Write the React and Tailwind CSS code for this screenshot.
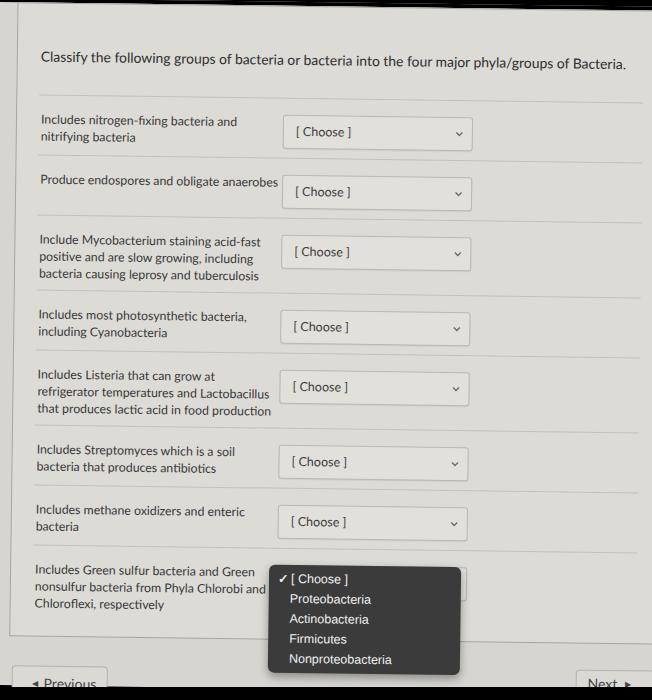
import React from 'react';

const rows = [
    ['Includes nitrogen-fixing bacteria and', 'nitrifying bacteria'],
    ['Produce endospores and obligate anaerobes'],
    ['Include Mycobacterium staining acid-fast', 'positive and are slow growing, including', 'bacteria causing leprosy and tuberculosis'],
    ['Includes most photosynthetic bacteria,', 'including Cyanobacteria'],
    ['Includes Listeria that can grow at', 'refrigerator temperatures and Lactobacillus', 'that produces lactic acid in food production'],
    ['Includes Streptomyces which is a soil', 'bacteria that produces antibiotics'],
    ['Includes methane oxidizers and enteric', 'bacteria'],
    ['Includes Green sulfur bacteria and Green', 'nonsulfur bacteria from Phyla Chlorobi and', 'Chloroflexi, respectively'],
];

const options = ['Proteobacteria', 'Actinobacteria', 'Firmicutes', 'Nonproteobacteria'];

const Select = () => (
    <div className="mt-[1px] w-[190px] h-[34px] shrink-0 flex items-center justify-between pl-[12px] pr-[8px] bg-[#e1e0db] border border-[#b9b8b3] rounded-[3px] shadow-[0_1px_1px_rgba(0,0,0,0.06)]">
        <span className="text-[12.5px] text-[#3d3d3d]">[ Choose ]</span>
        <svg width="9" height="6" viewBox="0 0 9 6" className="text-[#6a6a6a]">
            <path d="M1.5 1.5l3 3 3-3" fill="none" stroke="currentColor" strokeWidth="1.3" />
        </svg>
    </div>
);

const Menu = () => (
    <div className="absolute left-[236px] top-[16px] w-[192px] h-[108px] bg-[#3b3b3b] rounded-[6px] shadow-[0_4px_10px_rgba(0,0,0,0.35)] pt-[4px] font-['Liberation_Sans',sans-serif] text-[12.5px] text-[#f1f1f1]">
        <div className="relative pl-[22px] leading-[20px]">
            <span className="absolute left-[9px] top-0 font-bold">✓</span>
            [ Choose ]
        </div>
        {options.map((o) => (
            <div key={o} className="pl-[21px] leading-[20px]">{o}</div>
        ))}
    </div>
);

const App = () => {
    return (
        <div className="w-[652px] h-[700px] overflow-hidden bg-black flex flex-col font-['Lato',sans-serif]">
            <div className="w-[672px] h-[687px] shrink-0 -ml-[10px] pl-[10px] bg-[#d6d5d0] rotate-[0.75deg] origin-[160px_350px]">
                <div className="h-[4px] -ml-[10px] bg-black" />

                {/* Question card */}
                <div className="ml-[13px] bg-[#dcdbd6] border-l border-t border-b border-[#a6a5a0] pt-[43px]">
                    <h2 className="ml-[23px] text-[13.9px] leading-[20px] text-[#2e2e2e] mb-[28px]">
                        Classify the following groups of bacteria or bacteria into the four major phyla/groups of Bacteria.
                    </h2>

                    <div className="ml-[22px] w-[604px]">
                        {rows.map((lines, i) => {
                            const last = i === rows.length - 1;
                            const three = lines.length === 3;
                            return (
                                <div
                                    key={i}
                                    className={`relative flex items-start border-t border-[#c2c1bc] pl-[2px] pt-[15px] ${last ? 'pb-[24px]' : three ? 'pb-[8px]' : 'pb-[9px]'}`}
                                >
                                    <p className="w-[242px] shrink-0 text-[12.3px] leading-[17px] text-[#383838] whitespace-nowrap">
                                        {lines.map((l, j) => (
                                            <span key={j} className="block">{l}</span>
                                        ))}
                                    </p>
                                    <Select />
                                    {last && <Menu />}
                                </div>
                            );
                        })}
                    </div>
                </div>

                {/* Nav buttons */}
                <div className="flex items-start justify-between mt-[29px]">
                    <div className="ml-[16px] w-[96px] h-[40px] border border-[#b3b2ad] rounded-t-[4px] bg-[#dad9d4] pt-[7px] pl-[19px] flex items-start text-[14px] leading-[20px] text-[#444]">
                        <span className="text-[8px] mr-[6px] leading-[20px]">◀</span>
                        Previous
                    </div>
                    <div className="-mt-[3px] w-[82px] h-[40px] border border-[#b3b2ad] rounded-tl-[4px] bg-[#dad9d4] pt-[3px] pl-[11px] flex items-start text-[14px] leading-[20px] text-[#444]">
                        Next
                        <span className="text-[8px] ml-[8px] leading-[20px]">▶</span>
                    </div>
                </div>
            </div>
            <div className="relative z-10 h-[13px] shrink-0 bg-black" />
        </div>
    );
};

export default App;
